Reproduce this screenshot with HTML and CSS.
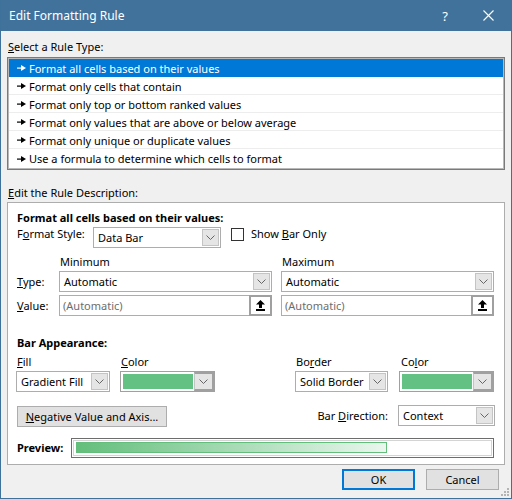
FILE: index.html
```html
<!DOCTYPE html>
<html>
<head>
<meta charset="utf-8">
<link rel="stylesheet" href="styles.css">
</head>
<body>
<div class="window">
  <div class="titlebar">
    <span class="title">Edit Formatting Rule</span>
    <span class="help">?</span>
    <span class="close"><svg width="11" height="11" viewBox="0 0 11 11"><path d="M0.5 0.5 L10.5 10.5 M10.5 0.5 L0.5 10.5" stroke="#fff" stroke-width="1.1" fill="none"/></svg></span>
  </div>
  <div class="body">
    <div class="label sel-label"><u>S</u>elect a Rule Type:</div>
    <div class="listbox">
      <div class="item selected"><svg class="arr" width="9" height="6" viewBox="0 0 9 6"><rect x="0" y="2.5" width="5" height="1.2" fill="currentColor"/><path d="M4 0 L9 3 L4 6 Z" fill="currentColor"/></svg>Format all cells based on their values</div>
      <div class="item"><svg class="arr" width="9" height="6" viewBox="0 0 9 6"><rect x="0" y="2.5" width="5" height="1.2" fill="currentColor"/><path d="M4 0 L9 3 L4 6 Z" fill="currentColor"/></svg>Format only cells that contain</div>
      <div class="item"><svg class="arr" width="9" height="6" viewBox="0 0 9 6"><rect x="0" y="2.5" width="5" height="1.2" fill="currentColor"/><path d="M4 0 L9 3 L4 6 Z" fill="currentColor"/></svg>Format only top or bottom ranked values</div>
      <div class="item"><svg class="arr" width="9" height="6" viewBox="0 0 9 6"><rect x="0" y="2.5" width="5" height="1.2" fill="currentColor"/><path d="M4 0 L9 3 L4 6 Z" fill="currentColor"/></svg>Format only values that are above or below average</div>
      <div class="item"><svg class="arr" width="9" height="6" viewBox="0 0 9 6"><rect x="0" y="2.5" width="5" height="1.2" fill="currentColor"/><path d="M4 0 L9 3 L4 6 Z" fill="currentColor"/></svg>Format only unique or duplicate values</div>
      <div class="item last"><svg class="arr" width="9" height="6" viewBox="0 0 9 6"><rect x="0" y="2.5" width="5" height="1.2" fill="currentColor"/><path d="M4 0 L9 3 L4 6 Z" fill="currentColor"/></svg>Use a formula to determine which cells to format</div>
    </div>
    <div class="label desc-label"><u>E</u>dit the Rule Description:</div>
    <div class="group">
      <div class="bold row-title">Format all cells based on their values:</div>
      <div class="row row-style">
        <span class="lbl lbl-style">F<u>o</u>rmat Style:</span>
        <div class="combo combo-style"><span class="val">Data Bar</span><span class="drop"><svg width="9" height="5" viewBox="0 0 9 5"><path d="M0.5 0.5 L4.5 4.5 L8.5 0.5" stroke="#666" fill="none"/></svg></span></div>
        <span class="check"></span>
        <span class="lbl-check">Show <u>B</u>ar Only</span>
      </div>
      <div class="row row-mm">
        <span class="col-lbl"></span>
        <span class="mm-lbl">Minimum</span>
        <span class="mm-lbl">Maximum</span>
      </div>
      <div class="row row-type">
        <span class="col-lbl"><u>T</u>ype:</span>
        <div class="combo combo-mm"><span class="val">Automatic</span><span class="drop"><svg width="9" height="5" viewBox="0 0 9 5"><path d="M0.5 0.5 L4.5 4.5 L8.5 0.5" stroke="#666" fill="none"/></svg></span></div>
        <div class="combo combo-mm"><span class="val">Automatic</span><span class="drop"><svg width="9" height="5" viewBox="0 0 9 5"><path d="M0.5 0.5 L4.5 4.5 L8.5 0.5" stroke="#666" fill="none"/></svg></span></div>
      </div>
      <div class="row row-value">
        <span class="col-lbl"><u>V</u>alue:</span>
        <div class="input combo-mm"><span class="ph">(Automatic)</span><span class="refbtn"><svg width="9" height="11" viewBox="0 0 9 11"><path d="M4.5 0 L9 4.5 H6 V8 H3 V4.5 H0 Z" fill="#000"/><rect x="0" y="9" width="9" height="2" fill="#000"/></svg></span></div>
        <div class="input combo-mm"><span class="ph">(Automatic)</span><span class="refbtn"><svg width="9" height="11" viewBox="0 0 9 11"><path d="M4.5 0 L9 4.5 H6 V8 H3 V4.5 H0 Z" fill="#000"/><rect x="0" y="9" width="9" height="2" fill="#000"/></svg></span></div>
      </div>
      <div class="bold row-bar">Bar Appearance:</div>
      <div class="row row-app">
        <div class="col col-fill">
          <span class="app-lbl"><u>F</u>ill</span>
          <div class="combo"><span class="val">Gradient Fill</span><span class="drop"><svg width="9" height="5" viewBox="0 0 9 5"><path d="M0.5 0.5 L4.5 4.5 L8.5 0.5" stroke="#666" fill="none"/></svg></span></div>
        </div>
        <div class="col col-color1">
          <span class="app-lbl"><u>C</u>olor</span>
          <div class="combo color-combo"><span class="swatch"></span><span class="drop"><svg width="9" height="5" viewBox="0 0 9 5"><path d="M0.5 0.5 L4.5 4.5 L8.5 0.5" stroke="#666" fill="none"/></svg></span></div>
        </div>
        <div class="col col-border">
          <span class="app-lbl">Bo<u>r</u>der</span>
          <div class="combo"><span class="val">Solid Border</span><span class="drop"><svg width="9" height="5" viewBox="0 0 9 5"><path d="M0.5 0.5 L4.5 4.5 L8.5 0.5" stroke="#666" fill="none"/></svg></span></div>
        </div>
        <div class="col col-color2">
          <span class="app-lbl">Co<u>l</u>or</span>
          <div class="combo color-combo"><span class="swatch"></span><span class="drop"><svg width="9" height="5" viewBox="0 0 9 5"><path d="M0.5 0.5 L4.5 4.5 L8.5 0.5" stroke="#666" fill="none"/></svg></span></div>
        </div>
      </div>
      <div class="row row-neg">
        <span class="btn btn-neg"><u>N</u>egative Value and Axis...</span>
        <span class="lbl-dir">Bar <u>D</u>irection:</span>
        <div class="combo combo-dir"><span class="val">Context</span><span class="drop"><svg width="9" height="5" viewBox="0 0 9 5"><path d="M0.5 0.5 L4.5 4.5 L8.5 0.5" stroke="#666" fill="none"/></svg></span></div>
      </div>
      <div class="row row-prev">
        <span class="bold lbl-prev">Preview:</span>
        <div class="preview-box"><div class="preview-inner"><div class="bar"></div></div></div>
      </div>
    </div>
    <div class="buttons">
      <span class="btn btn-ok">OK</span>
      <span class="btn btn-cancel">Cancel</span>
    </div>
  </div>
  <svg class="grip" width="8" height="8" viewBox="0 0 8 8"><g fill="#b4b4b4"><rect x="6" y="0" width="2" height="2"/><rect x="3" y="3" width="2" height="2"/><rect x="6" y="3" width="2" height="2"/><rect x="0" y="6" width="2" height="2"/><rect x="3" y="6" width="2" height="2"/><rect x="6" y="6" width="2" height="2"/></g></svg>
</div>
</body>
</html>
```
FILE: styles.css
```css
* { box-sizing: border-box; }
html, body { margin: 0; padding: 0; }
body {
  font-family: "Noto Sans", "Open Sans", sans-serif;
  font-size: 11px;
  color: #000;
  background: #f0f0f0;
}
u { text-decoration: underline; text-underline-offset: 1px; }
.window {
  position: relative;
  width: 512px;
  height: 499px;
  background: #f0f0f0;
  border: 1px solid #3f729b;
  border-top: none;
  display: flex;
  flex-direction: column;
}
.titlebar {
  height: 31px;
  flex: none;
  background: #41729c;
  color: #fff;
  display: flex;
  align-items: center;
  padding-left: 8px;
}
.title { font-size: 12px; }
.help {
  margin-left: auto;
  width: 20px;
  text-align: center;
  font-size: 13px;
  margin-right: 10px;
}
.close {
  width: 46px;
  display: flex;
  justify-content: center;
  align-items: center;
}
.body {
  padding: 0 6px;
  display: flex;
  flex-direction: column;
}
.label { height: 14px; line-height: 14px; padding-left: 1px; }
.sel-label { margin-top: 9px; }
.listbox {
  margin-top: 3px;
  height: 113px;
  border: 1px solid #7a7a7a;
  padding: 1px;
  background: #fff;
  box-shadow: inset 0 0 0 1px #b8b8b8;
}
.item {
  height: 18px;
  display: flex;
  align-items: center;
  padding-left: 8px;
  padding-top: 1px;
  border-bottom: 1px solid #ededed;
  white-space: nowrap;
  overflow: hidden;
}
.item.last { border-bottom: none; }
.item .arr { margin-right: 3px; flex: none; }
.item.selected { background: #0078d7; color: #fff; border-bottom-color: #0078d7; }
.desc-label { margin-top: 16px; }
.group {
  margin-top: 2px;
  height: 263px;
  border: 1px solid #adadad;
  background: #fff;
  padding: 0 9px 0 8px;
  display: flex;
  flex-direction: column;
}
.bold { font-weight: bold; height: 14px; line-height: 14px; padding-left: 1px; }
.row { display: flex; flex: none; }
.row-title { margin-top: 8px; }
.row-style { margin-top: 2px; height: 21px; align-items: flex-start; }
.lbl-style { width: 77px; padding-left: 1px; line-height: 14px; }
.combo {
  display: flex;
  align-items: stretch;
  height: 21px;
  border: 1px solid #adadad;
  background: #fff;
  padding: 1px;
}
.combo .val { flex: 1; padding-left: 3px; line-height: 17px; white-space: nowrap; overflow: hidden; }
.combo .drop {
  width: 17px;
  flex: none;
  background: #e5e5e5;
  border: 1px solid #c4c4c4;
  display: flex;
  align-items: center;
  justify-content: center;
}
.combo-style { width: 128px; }
.check {
  width: 13px; height: 13px;
  border: 1px solid #333;
  background: #fff;
  margin: 1px 0 0 10px;
}
.lbl-check { margin-left: 7px; line-height: 14px; }
.row-mm { margin-top: 7px; height: 14px; line-height: 14px; column-gap: 9px; }
.col-lbl { width: 43px; padding-left: 1px; flex: none; line-height: 14px; }
.row-mm .col-lbl { margin-right: -9px; }
.mm-lbl { width: 213px; padding-left: 1px; }
.row-type { margin-top: 2px; height: 21px; align-items: center; column-gap: 9px; }
.row-type .col-lbl, .row-value .col-lbl { margin-right: -9px; }
.combo-mm { width: 213px; }
.row-value { margin-top: 3px; height: 21px; align-items: center; column-gap: 9px; }
.input {
  display: flex;
  height: 21px;
  border: 1px solid #adadad;
  background: #fff;
}
.input .ph { flex: 1; color: #6d6d6d; padding-left: 3px; line-height: 19px; }
.refbtn {
  width: 23px;
  flex: none;
  margin: -1px -1px -1px 0;
  border: 2px solid #a0a0a0;
  background: #fff;
  display: flex;
  align-items: center;
  justify-content: center;
}
.row-bar { margin-top: 20px; }
.row-app { margin-top: 5px; height: 37px; }
.col { display: flex; flex-direction: column; }
.app-lbl { height: 14px; line-height: 14px; padding-left: 1px; margin-bottom: 2px; }
.col-fill { width: 94px; }
.col-color1 { width: 95px; margin-left: 10px; }
.col-border { width: 93px; margin-left: 80px; }
.col-color2 { width: 95px; margin-left: 11px; }
.col-color2 .app-lbl { padding-left: 2px; }
.color-combo { padding: 2px; border-color: #a0a0a0; }
.color-combo .swatch { flex: 1; background: #63c184; margin-right: 1px; }
.color-combo .drop { margin: -2px -2px -2px 0; border: 2px solid #a0a0a0; border-left: 1px solid #c4c4c4; width: 20px; }
.row-neg { margin-top: 13px; height: 22px; align-items: center; }
.btn {
  display: flex;
  align-items: center;
  justify-content: center;
  background: #e1e1e1;
  border: 1px solid #adadad;
  height: 21px;
}
.btn-neg { width: 150px; margin-left: 1px; align-self: flex-end; }
.lbl-dir { margin-left: auto; margin-right: 10px; line-height: 14px; }
.combo-dir { width: 97px; align-self: flex-start; }
.row-prev { margin-top: 11px; height: 20px; align-items: center; }
.lbl-prev { width: 55px; }
.preview-box {
  width: 423px;
  height: 20px;
  border: 1px solid #6d6d6d;
  padding: 1px;
  background: #fff;
}
.preview-inner {
  height: 100%;
  border: 1px solid #d4d4d4;
  padding: 1px 2px;
}
.bar {
  width: 311px;
  height: 11px;
  border: 1px solid #63be7b;
  background: linear-gradient(to right, #63be7b, #eaf6ee);
}
.buttons {
  margin-top: 4px;
  display: flex;
  justify-content: flex-end;
  column-gap: 11px;
  padding-right: 6px;
}
.btn-ok { width: 73px; border: 2px solid #0078d7; }
.btn-cancel { width: 73px; }
.grip { position: absolute; right: 2px; bottom: 2px; }
```
